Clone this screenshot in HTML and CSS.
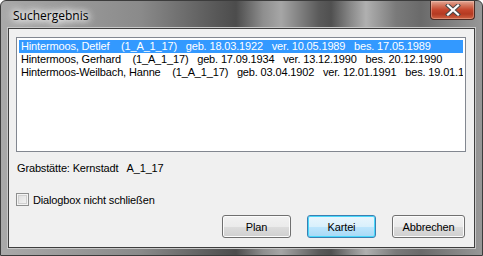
FILE: index.html
```html
<!DOCTYPE html>
<html>
<head>
<meta charset="utf-8">
<link rel="stylesheet" href="styles.css">
</head>
<body>
<div class="window">
  <div class="titlebar">
    <span class="title">Suchergebnis</span>
    <div class="close">
      <svg width="16" height="12" viewBox="0 0 16 12">
        <path d="M3 1.5 L13 10.5 M13 1.5 L3 10.5" stroke="#4a4a4a" stroke-width="4.2" stroke-linecap="square"/>
        <path d="M3 1.5 L13 10.5 M13 1.5 L3 10.5" stroke="#ffffff" stroke-width="2.2" stroke-linecap="square"/>
      </svg>
    </div>
  </div>
  <div class="client">
    <div class="listbox">
      <div class="row selected">Hintermoos, Detlef    (1_A_1_17)   geb. 18.03.1922   ver. 10.05.1989   bes. 17.05.1989</div>
      <div class="row">Hintermoos, Gerhard    (1_A_1_17)   geb. 17.09.1934   ver. 13.12.1990   bes. 20.12.1990</div>
      <div class="row">Hintermoos-Weilbach, Hanne    (1_A_1_17)   geb. 03.04.1902   ver. 12.01.1991   bes. 19.01.1991</div>
    </div>
    <div class="grab">Grabstätte: Kernstadt   A_1_17</div>
    <label class="check"><span class="box"></span>Dialogbox nicht schließen</label>
    <div class="buttons">
      <button class="btn">Plan</button>
      <button class="btn default">Kartei</button>
      <button class="btn">Abbrechen</button>
    </div>
  </div>
</div>
</body>
</html>
```
FILE: styles.css
```css
html, body {
  margin: 0;
  padding: 0;
  background: #ffffff;
}
.window {
  position: relative;
  width: 483px;
  height: 256px;
  box-sizing: border-box;
  border: 1px solid #3c3c3c;
  border-radius: 6px 6px 0 0;
  background:
    linear-gradient(90deg, #a9a9a9 0px, #9c9c9c 60px, #8a8a8a 140px, #585858 215px, #4c4c4c 235px, #8e8e8e 262px, #a6a6a6 280px, #5a5a5a 318px, #505050 330px, #8a8a8a 350px, #b0b0b0 365px, #7a7a7a 395px, #6a6a6a 420px, #999 483px);
  display: flex;
  flex-direction: column;
  padding: 0 7px 7px 7px;
  font-family: "Liberation Sans", Arial, sans-serif;
}
.titlebar {
  height: 27px;
  display: flex;
  align-items: flex-start;
  justify-content: space-between;
}
.title {
  font-family: "Open Sans", "Noto Sans", sans-serif;
  font-size: 12px;
  color: #000;
  margin-top: 6px;
  margin-left: 1px;
  padding: 0 4px;
  text-shadow: 0 0 6px #fff, 0 0 8px #fff, 0 0 10px #fff, 0 0 12px #fff;
}
.close {
  position: absolute;
  top: 0;
  right: 7px;
  width: 45px;
  height: 19px;
  box-sizing: border-box;
  border: 1px solid #4a2a24;
  border-top: none;
  border-radius: 0 0 4px 4px;
  background: linear-gradient(180deg, #e4a898 0px, #d47a62 4px, #c4452c 9px, #b43a22 13px, #d46a4a 19px);
  display: flex;
  align-items: center;
  justify-content: center;
  box-shadow: inset 0 0 0 1px rgba(255,220,200,0.35);
}
.client {
  flex: 1;
  background: #f0f0f0;
  border: 1px solid #3e3e3e;
  box-shadow: 0 0 0 1px #c8c8c8;
  display: flex;
  flex-direction: column;
  padding: 8px 8px 0 7px;
  font-size: 11px;
  color: #000;
}
.listbox {
  height: 109px;
  flex: none;
  background: #fff;
  border: 1px solid #828790;
  padding: 2px 2px;
  overflow: hidden;
}
.row {
  white-space: pre;
  height: 13px;
  line-height: 13px;
  padding-left: 2px;
  letter-spacing: -0.15px;
  overflow: hidden;
}
.row.selected {
  background: #3399ff;
  color: #fff;
}
.grab {
  margin-top: 10px;
  white-space: pre;
  padding-left: 1px;
  letter-spacing: -0.15px;
}
.check {
  margin-top: 19px;
  display: flex;
  align-items: center;
  gap: 4px;
  letter-spacing: -0.15px;
}
.box {
  width: 11px;
  height: 11px;
  border: 1px solid #8e8f8f;
  background: linear-gradient(135deg, #dcdcdc, #f6f6f6);
  box-shadow: inset 0 0 0 1px #f4f4f4, inset 0 0 0 2px #d0d0d0;
}
.buttons {
  margin-top: 9px;
  display: flex;
  justify-content: flex-end;
  gap: 16px;
  padding-right: 1px;
}
.btn {
  width: 69px;
  height: 23px;
  font-family: "Liberation Sans", Arial, sans-serif;
  font-size: 11px;
  letter-spacing: -0.15px;
  color: #000;
  border: 1px solid #707070;
  border-radius: 3px;
  background: linear-gradient(180deg, #f2f2f2 0%, #ebebeb 50%, #dddddd 51%, #cfcfcf 100%);
  box-shadow: inset 0 0 0 1px #fcfcfc;
  padding: 0;
}
.btn.default {
  border-color: #3c7fb1;
  background: linear-gradient(180deg, #eaf6fd 0%, #d9f0fc 50%, #bee6fd 51%, #a7d9f5 100%);
  box-shadow: inset 0 0 0 1px #48d8fb;
}
.btn:last-child {
  width: 73px;
}
```
